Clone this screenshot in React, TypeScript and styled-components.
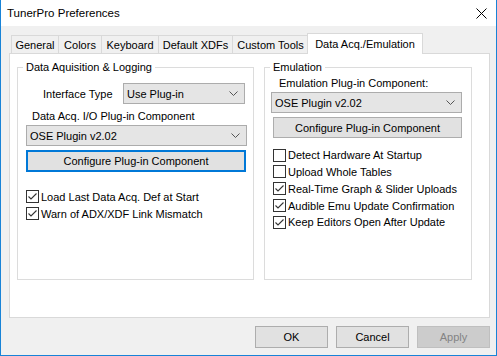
import React from "react";
import styled, { createGlobalStyle } from "styled-components";

const GlobalStyle = createGlobalStyle`
  html, body {
    margin: 0;
    padding: 0;
    background: #ffffff;
  }
  body {
    font-family: "Liberation Sans", Arial, sans-serif;
    font-size: 11px;
    color: #000000;
  }
`;

const Window = styled.div`
  width: 497px;
  height: 356px;
  box-sizing: border-box;
  border: 1px solid #1883d7;
  border-top: none;
  display: flex;
  flex-direction: column;
  background: #f0f0f0;
  overflow: hidden;
`;

const TitleBar = styled.div`
  height: 26px;
  background: #ffffff;
  display: flex;
  align-items: center;
  justify-content: space-between;
  padding: 0 9px 0 6px;
  font-size: 11.5px;
  flex-shrink: 0;
`;

const CloseButton = styled.div`
  width: 12px;
  height: 12px;
  display: flex;
  align-items: center;
  justify-content: center;
`;

const Body = styled.div`
  flex: 1;
  display: flex;
  flex-direction: column;
  padding: 7px 6px 0 8px;
`;

const TabStrip = styled.div`
  display: flex;
  align-items: flex-end;
  height: 20px;
  padding-left: 2px;
  position: relative;
  z-index: 1;
`;

const Tab = styled.div<{ $w: number; $active?: boolean }>`
  box-sizing: border-box;
  width: ${(p) => p.$w}px;
  height: ${(p) => (p.$active ? 21 : 18)}px;
  margin-left: ${(p) => (p.$active ? -2 : -1)}px;
  margin-bottom: ${(p) => (p.$active ? -1 : 0)}px;
  border: 1px solid #d9d9d9;
  border-bottom: none;
  background: ${(p) => (p.$active ? "#ffffff" : "#f0f0f0")};
  display: flex;
  align-items: center;
  justify-content: center;
  padding-top: ${(p) => (p.$active ? 0 : 1)}px;
  white-space: nowrap;
  &:first-child {
    margin-left: 0;
  }
`;

const Panel = styled.div`
  box-sizing: border-box;
  height: 265px;
  background: #ffffff;
  border: 1px solid #d9d9d9;
  padding: 5px 16px 0 7px;
  display: grid;
  grid-template-columns: 237px 208px;
  column-gap: 10px;
  align-items: start;
`;

const Group = styled.fieldset`
  box-sizing: border-box;
  margin: 0;
  padding: 0;
  height: 221px;
  border: 1px solid #dcdcdc;
  display: flex;
  flex-direction: column;
  align-items: flex-start;
  min-width: 0;
`;

const Legend = styled.legend`
  margin-left: 5px;
  padding: 0 3px;
  line-height: 16px;
`;

const FieldRow = styled.div<{ $left: number; $top: number }>`
  display: flex;
  align-items: center;
  margin-left: ${(p) => p.$left}px;
  margin-top: ${(p) => p.$top}px;
`;

const Label = styled.div<{ $left: number; $top: number; $w?: number }>`
  line-height: 16px;
  margin-left: ${(p) => p.$left}px;
  margin-top: ${(p) => p.$top}px;
  width: ${(p) => (p.$w ? `${p.$w}px` : "auto")};
  white-space: nowrap;
`;

const Select = styled.div<{ $w: number; $left?: number; $top?: number }>`
  box-sizing: border-box;
  width: ${(p) => p.$w}px;
  height: 21px;
  margin-left: ${(p) => p.$left ?? 0}px;
  margin-top: ${(p) => p.$top ?? 0}px;
  background: #e5e5e5;
  border: 1px solid #acacac;
  display: flex;
  align-items: center;
  justify-content: space-between;
  padding: 0 6px 0 3px;
  white-space: nowrap;
`;

const PushButton = styled.div<{
  $w: number;
  $h?: number;
  $left?: number;
  $top?: number;
  $focused?: boolean;
  $disabled?: boolean;
}>`
  box-sizing: border-box;
  width: ${(p) => p.$w}px;
  height: ${(p) => p.$h ?? 21}px;
  margin-left: ${(p) => p.$left ?? 0}px;
  margin-top: ${(p) => p.$top ?? 0}px;
  background: ${(p) => (p.$disabled ? "#cccccc" : "#e1e1e1")};
  border: ${(p) =>
    p.$focused
      ? "2px solid #0078d7"
      : p.$disabled
      ? "1px solid #bfbfbf"
      : "1px solid #adadad"};
  color: ${(p) => (p.$disabled ? "#838383" : "#000000")};
  display: flex;
  align-items: center;
  justify-content: center;
  white-space: nowrap;
`;

const CheckRow = styled.div<{ $top?: number; $h?: number }>`
  display: flex;
  align-items: center;
  height: ${(p) => p.$h ?? 17}px;
  margin-left: 8px;
  margin-top: ${(p) => p.$top ?? 0}px;
  white-space: nowrap;
`;

const Box = styled.div`
  box-sizing: border-box;
  width: 13px;
  height: 13px;
  border: 1px solid #333333;
  background: #ffffff;
  margin-right: 2px;
  display: flex;
  align-items: center;
  justify-content: center;
  flex-shrink: 0;
`;

const Footer = styled.div`
  display: flex;
  justify-content: flex-end;
  gap: 8px;
  margin-top: 8px;
`;

const Chevron = () => (
  <svg width="9" height="5" viewBox="0 0 9 5">
    <polyline points="0.5,0.5 4.5,4.5 8.5,0.5" fill="none" stroke="#555555" strokeWidth="1" />
  </svg>
);

function CheckBox({ checked, label, top, h }: { checked: boolean; label: string; top?: number; h?: number }) {
  return (
    <CheckRow $top={top} $h={h}>
      <Box>
        {checked && (
          <svg width="11" height="11" viewBox="0 0 11 11">
            <polyline points="1.5,5.5 4,8 9.5,2.5" fill="none" stroke="#333333" strokeWidth="1.1" />
          </svg>
        )}
      </Box>
      {label}
    </CheckRow>
  );
}

const tabs = [
  { name: "General", w: 48 },
  { name: "Colors", w: 44 },
  { name: "Keyboard", w: 58 },
  { name: "Default XDFs", w: 75 },
  { name: "Custom Tools", w: 77 },
  { name: "Data Acq./Emulation", w: 116, active: true },
];

export default function App() {
  return (
    <>
      <GlobalStyle />
      <Window>
        <TitleBar>
          <span>TunerPro Preferences</span>
          <CloseButton>
            <svg width="11" height="11" viewBox="0 0 11 11">
              <path d="M0.5 0.5 L10.5 10.5 M10.5 0.5 L0.5 10.5" stroke="#000000" strokeWidth="1" />
            </svg>
          </CloseButton>
        </TitleBar>
        <Body>
          <TabStrip>
            {tabs.map((t) => (
              <Tab key={t.name} $w={t.w} $active={t.active}>
                {t.name}
              </Tab>
            ))}
          </TabStrip>
          <Panel>
            <Group>
              <Legend>Data Aquisition &amp; Logging</Legend>
              <FieldRow $left={25} $top={8}>
                <Label $left={0} $top={0} $w={80}>
                  Interface Type
                </Label>
                <Select $w={122}>
                  Use Plug-in
                  <Chevron />
                </Select>
              </FieldRow>
              <Label $left={14} $top={4}>
                Data Acq. I/O Plug-in Component
              </Label>
              <Select $w={221} $left={8} $top={1}>
                OSE Plugin v2.02
                <Chevron />
              </Select>
              <PushButton $w={220} $h={22} $left={8} $top={4} $focused>
                Configure Plug-in Component
              </PushButton>
              <CheckBox checked top={16} label="Load Last Data Acq. Def at Start" />
              <CheckBox checked label="Warn of ADX/XDF Link Mismatch" />
            </Group>
            <Group>
              <Legend>Emulation</Legend>
              <Label $left={14} $top={0}>
                Emulation Plug-in Component:
              </Label>
              <Select $w={191} $left={6} $top={1}>
                OSE Plugin v2.02
                <Chevron />
              </Select>
              <PushButton $w={189} $left={8} $top={4}>
                Configure Plug-in Component
              </PushButton>
              <CheckBox checked={false} top={9} h={16} label="Detect Hardware At Startup" />
              <CheckBox checked={false} h={17} label="Upload Whole Tables" />
              <CheckBox checked h={17} label="Real-Time Graph & Slider Uploads" />
              <CheckBox checked h={17} label="Audible Emu Update Confirmation" />
              <CheckBox checked h={16} label="Keep Editors Open After Update" />
            </Group>
          </Panel>
          <Footer>
            <PushButton $w={73} $h={22}>
              OK
            </PushButton>
            <PushButton $w={73} $h={22}>
              Cancel
            </PushButton>
            <PushButton $w={73} $h={22} $disabled>
              Apply
            </PushButton>
          </Footer>
        </Body>
      </Window>
    </>
  );
}
